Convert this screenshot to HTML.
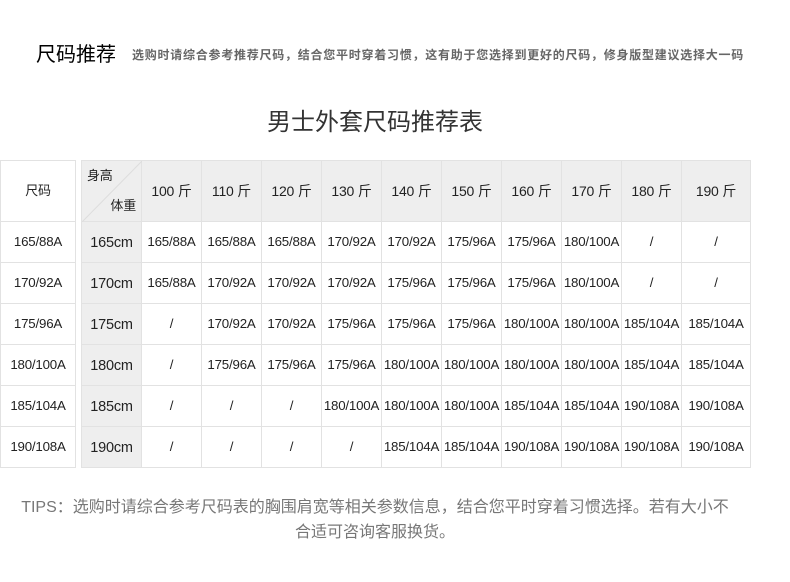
<!DOCTYPE html>
<html><head><meta charset="utf-8"><style>
body{margin:0;width:790px;height:582px;background:#fff;font-family:"Liberation Sans","Noto Sans CJK SC",sans-serif;position:relative;overflow:hidden;color:#222}
.h1{position:absolute;left:36px;top:38px;font-size:20px;color:#000}
.sub{position:absolute;left:132px;top:46px;font-size:12px;letter-spacing:0.75px;color:#666;font-weight:bold;white-space:nowrap}
.t{position:absolute;left:0;width:750px;top:102px;text-align:center;font-size:24px;color:#333}
table{position:absolute;border-collapse:collapse;table-layout:fixed}
td{border:1px solid #e2e2e2;text-align:center;vertical-align:middle;font-size:13.3px;line-height:18px;padding:0;height:40px;white-space:nowrap;letter-spacing:-0.2px}
.g{background:#eee;font-size:14.5px;line-height:18px;padding-top:2px;height:38px}
.tips{position:absolute;left:0;width:750px;top:495px;text-align:center;font-size:16px;color:#777;line-height:25px}
</style></head><body>
<div class="h1">尺码推荐</div>
<div class="sub">选购时请综合参考推荐尺码，结合您平时穿着习惯，这有助于您选择到更好的尺码，修身版型建议选择大一码</div>
<div class="t">男士外套尺码推荐表</div>
<table style="left:0;top:160px;width:76px">
<tr><td style="height:60px;font-size:13px">尺码</td></tr>
<tr><td>165/88A</td></tr><tr><td>170/92A</td></tr><tr><td>175/96A</td></tr><tr><td>180/100A</td></tr><tr><td>185/104A</td></tr><tr><td>190/108A</td></tr>
</table>
<table style="left:81px;top:160px;width:669px">
<colgroup><col style="width:60px"><col style="width:60px"><col style="width:60px"><col style="width:60px"><col style="width:60px"><col style="width:60px"><col style="width:60px"><col style="width:60px"><col style="width:60px"><col style="width:60px"><col style="width:69px"></colgroup>
<tr style="background:#eee"><td style="height:60px;position:relative;font-size:13px"><svg style="position:absolute;left:0;top:0" width="60" height="61"><line x1="0" y1="61" x2="60" y2="0" stroke="#ddd"/></svg><span style="position:absolute;left:5px;top:6px">身高</span><span style="position:absolute;right:5px;bottom:6px">体重</span></td>
<td style="font-size:14px">100 斤</td><td style="font-size:14px">110 斤</td><td style="font-size:14px">120 斤</td><td style="font-size:14px">130 斤</td><td style="font-size:14px">140 斤</td><td style="font-size:14px">150 斤</td><td style="font-size:14px">160 斤</td><td style="font-size:14px">170 斤</td><td style="font-size:14px">180 斤</td><td style="font-size:14px">190 斤</td></tr>
<tr><td class="g">165cm</td><td>165/88A</td><td>165/88A</td><td>165/88A</td><td>170/92A</td><td>170/92A</td><td>175/96A</td><td>175/96A</td><td>180/100A</td><td>/</td><td>/</td></tr>
<tr><td class="g">170cm</td><td>165/88A</td><td>170/92A</td><td>170/92A</td><td>170/92A</td><td>175/96A</td><td>175/96A</td><td>175/96A</td><td>180/100A</td><td>/</td><td>/</td></tr>
<tr><td class="g">175cm</td><td>/</td><td>170/92A</td><td>170/92A</td><td>175/96A</td><td>175/96A</td><td>175/96A</td><td>180/100A</td><td>180/100A</td><td>185/104A</td><td>185/104A</td></tr>
<tr><td class="g">180cm</td><td>/</td><td>175/96A</td><td>175/96A</td><td>175/96A</td><td>180/100A</td><td>180/100A</td><td>180/100A</td><td>180/100A</td><td>185/104A</td><td>185/104A</td></tr>
<tr><td class="g">185cm</td><td>/</td><td>/</td><td>/</td><td>180/100A</td><td>180/100A</td><td>180/100A</td><td>185/104A</td><td>185/104A</td><td>190/108A</td><td>190/108A</td></tr>
<tr><td class="g">190cm</td><td>/</td><td>/</td><td>/</td><td>/</td><td>185/104A</td><td>185/104A</td><td>190/108A</td><td>190/108A</td><td>190/108A</td><td>190/108A</td></tr>
</table>
<div class="tips">TIPS：选购时请综合参考尺码表的胸围肩宽等相关参数信息，结合您平时穿着习惯选择。若有大小不<br>合适可咨询客服换货。</div>
</body></html>
